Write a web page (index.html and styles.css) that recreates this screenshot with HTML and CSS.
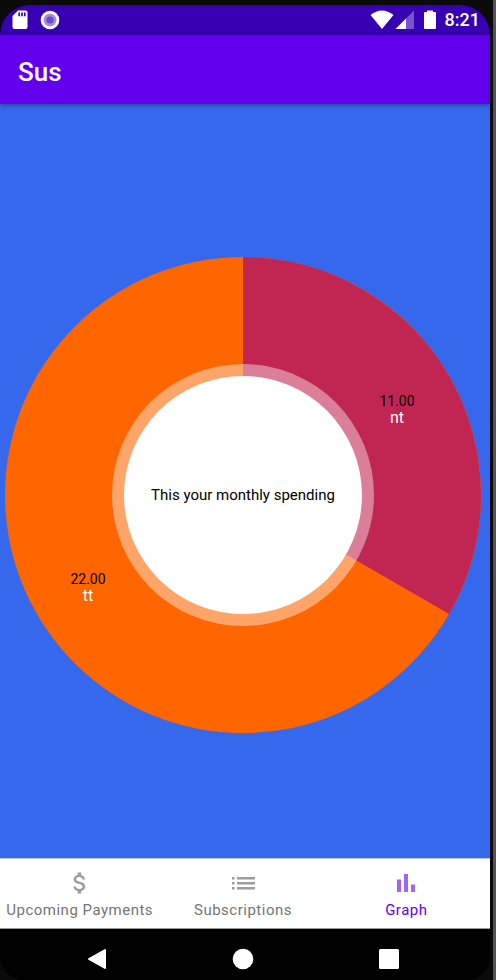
FILE: index.html
```html
<!DOCTYPE html>
<html lang="en">
<head>
<meta charset="utf-8">
<meta name="viewport" content="width=device-width, initial-scale=1">
<title>Sus</title>
<link rel="stylesheet" href="styles.css">
</head>
<body>
<div class="device">
  <div class="screen">
    <div class="status">
      <svg class="sd" width="16" height="20" viewBox="0 0 16 20" aria-hidden="true"><path fill="#fff" d="M6 0.500H13.500Q15.500 0.500 15.500 2.500V17Q15.500 19 13.500 19H2.500Q0.500 19 0.500 17V6Z"/><path stroke="#3700b3" stroke-width="1.700" d="M7.200 2.500V6.200M10 2.500V6.200M12.800 2.500V6.200"/></svg>
      <svg width="20" height="20" viewBox="0 0 20 20" aria-hidden="true"><circle cx="10" cy="10" r="9.300" fill="#fff"/><circle cx="10" cy="10" r="6.500" fill="#a58bdc"/><circle cx="10" cy="10" r="3.600" fill="#6d48c8"/></svg>
      <span class="spacer"></span>
      <svg width="24" height="20" viewBox="0 0 24 20" aria-hidden="true"><path fill="#fff" d="M0.500 5Q12-4 23.500 5L12 19Z"/></svg>
      <svg class="signal" width="20" height="20" viewBox="0 0 20 20" aria-hidden="true"><path fill="#7b52cd" d="M19 0.500V19H0.500Z"/><path fill="#fff" d="M11 8.500V19H0.500Z"/></svg>
      <svg class="battery" width="14" height="20" viewBox="0 0 14 20" aria-hidden="true"><path fill="#fff" d="M4 0.500H10V2H12Q13 2 13 3V18Q13 19 12 19H2Q1 19 1 18V3Q1 2 2 2H4Z"/></svg>
      <time class="clock">8:21</time>
    </div>
    <header class="appbar"><h1>Sus</h1></header>
    <main class="content">
      <svg class="chart" viewBox="-238 -238 476 476" role="img" aria-label="Monthly spending">
        <circle r="238" fill="#ff6600"/>
        <path fill="#c12552" d="M0 0V-238A238 238 0 0 1 206.114 119Z"/>
        <circle r="131" fill="#fff" fill-opacity="0.412"/>
        <circle r="119" fill="#fff"/>
        <g text-anchor="middle">
          <text class="caption" y="5">This your monthly spending</text>
          <text class="value" x="154" y="-89">11.00</text>
          <text class="name" x="154" y="-72">nt</text>
          <text class="value" x="-155" y="89">22.00</text>
          <text class="name" x="-155" y="106">tt</text>
        </g>
      </svg>
    </main>
    <nav class="tabs">
      <a href="#payments"><svg width="28" height="28" viewBox="0 0 24 24" aria-hidden="true"><path fill="currentColor" d="M11.800 10.900c-2.270-.59-3-1.200-3-2.150 0-1.090 1.010-1.850 2.700-1.850 1.780 0 2.440.85 2.500 2.100h2.210c-.07-1.720-1.120-3.300-3.210-3.810V3h-3v2.160c-1.940.42-3.500 1.680-3.500 3.610 0 2.310 1.910 3.460 4.700 4.130 2.500.6 3 1.480 3 2.410 0 .69-.49 1.790-2.700 1.790-2.060 0-2.870-.92-2.980-2.100h-2.200c.12 2.190 1.760 3.420 3.680 3.830V21h3v-2.150c1.950-.37 3.500-1.500 3.500-3.550 0-2.840-2.430-3.810-4.700-4.400z"/></svg><span>Upcoming Payments</span></a>
      <a href="#subscriptions"><svg width="28" height="28" viewBox="0 0 28 28" aria-hidden="true"><path fill="currentColor" d="M3 8h2.500v2.500H3zM3 13h2.500v2.500H3zM3 18h2.500v2.500H3zM8 8h18v2.500H8zM8 13h18v2.500H8zM8 18h18v2.500H8z"/></svg><span>Subscriptions</span></a>
      <a class="active" href="#graph" aria-current="page"><svg width="28" height="28" viewBox="0 0 28 28" aria-hidden="true"><path fill="currentColor" d="M5 10.500h4V23H5zM12 5h4v18h-4zM19 15.500h4V23h-4z"/></svg><span>Graph</span></a>
    </nav>
    <div class="system">
      <button aria-label="Back"><svg width="22" height="22" viewBox="0 0 22 22"><path fill="#fff" stroke="#fff" stroke-width="2" stroke-linejoin="round" d="M19 2V20L3 11Z"/></svg></button>
      <button aria-label="Home"><svg width="22" height="22" viewBox="0 0 22 22"><circle cx="11" cy="11" r="10.300" fill="#fff"/></svg></button>
      <button aria-label="Recent apps"><svg width="22" height="22" viewBox="0 0 22 22"><rect x="1" y="1" width="20" height="20" rx="1.500" fill="#fff"/></svg></button>
    </div>
  </div>
</div>
</body>
</html>
```
FILE: styles.css
```css
* { box-sizing: border-box; }

body {
  margin: 0;
  font-family: Roboto, "Liberation Sans", sans-serif;
}

.device {
  display: flex;
  min-height: 100vh;
  padding: 5px 3px 0 0;
  background: #0a0a0a;
  border-right: 3px solid #535257;
}

.screen {
  flex: 1;
  display: flex;
  flex-direction: column;
  overflow: hidden;
  border-radius: 30px 30px 24px 24px;
  background: #000;
}

.status {
  display: flex;
  align-items: center;
  height: 30px;
  padding: 0 10px 0 12px;
  background: #3700b3;
}

.sd { margin-right: 12px; }
.spacer { flex: 1; }
.signal { margin-left: 1px; }
.battery { margin: 0 8px; }

.clock {
  color: #fff;
  font-size: 18px;
  font-weight: 500;
  line-height: 30px;
}

.appbar {
  position: relative;
  display: flex;
  align-items: center;
  height: 69px;
  padding: 4px 18px 0;
  background: #6200ee;
  box-shadow: 0 1px 4px rgba(0, 0, 0, 0.4);
}

.appbar h1 {
  margin: 0;
  color: #fff;
  font-size: 26px;
  font-weight: 500;
  line-height: 32px;
}

.content {
  flex: 1;
  display: flex;
  align-items: center;
  justify-content: center;
  padding: 28px 9px 0 5px;
  background: #3568ed;
}

.chart { display: block; width: 100%; }
.caption { font-size: 15px; }
.value { font-size: 14px; }
.name { font-size: 16px; fill: #fff; }

.tabs {
  display: grid;
  grid-template-columns: repeat(3, 1fr);
  height: 71px;
  background: #fff;
  border-top: 1px solid #b9c9f8;
  border-bottom: 1px solid #999;
}

.tabs a {
  display: flex;
  flex-direction: column;
  align-items: center;
  padding: 10px 4px 0 0;
  color: #757575;
  font-size: 15px;
  line-height: 20px;
  letter-spacing: 0.500px;
  text-decoration: none;
  white-space: nowrap;
}

.tabs svg { opacity: 0.700; margin-bottom: 3px; }
.tabs .active { color: #6200ee; }
.tabs .active svg { opacity: 0.600; }

.system {
  display: grid;
  grid-template-columns: repeat(3, 1fr);
  height: 51px;
  padding: 8px 28px 0 24px;
}

.system button {
  display: flex;
  align-items: center;
  justify-content: center;
  padding: 0;
  border: 0;
  background: none;
}
```
